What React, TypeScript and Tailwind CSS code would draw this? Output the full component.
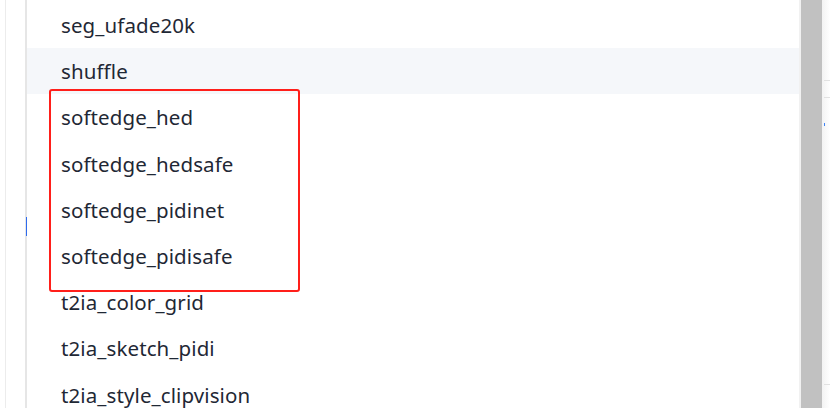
const options = [
  'seg_ufade20k',
  'shuffle',
  'softedge_hed',
  'softedge_hedsafe',
  'softedge_pidinet',
  'softedge_pidisafe',
  't2ia_color_grid',
  't2ia_sketch_pidi',
  't2ia_style_clipvision',
];

export default function App() {
  return (
    <div className="flex h-[408px] w-[830px] overflow-hidden bg-white" style={{ fontFamily: '"Noto Sans", sans-serif' }}>
      {/* left edge of the page behind the popup */}
      <div className="flex h-full w-[27px] shrink-0">
        <div className="ml-[5px] h-full w-[20px] border-l border-[#ececec]" />
        <div className="flex h-full w-[2px] flex-col bg-[#e6e6e6] pt-[217px]">
          <span className="ml-[1px] h-[19px] w-[1px] bg-[#2f6bed]" />
        </div>
      </div>

      {/* dropdown list */}
      <div className="relative flex w-[772px] shrink-0 flex-col pt-[2px]">
        {options.map((name) => (
          <div
            key={name}
            className={`h-[46.2px] shrink-0 pl-[34px] text-[20.5px] leading-[46.2px] tracking-[0.1px] text-[#1f2835] ${
              name === 'shuffle' ? 'bg-[#f5f7fa]' : ''
            }`}
          >
            {name}
          </div>
        ))}
        <div className="pointer-events-none absolute left-[22px] top-[89px] h-[203px] w-[251px] rounded-[3px] border-2 border-[#ff1f1a]" />
      </div>

      {/* scrollbar */}
      <div className="h-full w-[23px] shrink-0 border-l-2 border-[#f1f1f1] bg-[#c1c1c1]" />

      {/* right page edge */}
      <div className="flex h-full flex-1 flex-col bg-gradient-to-r from-[#f3f3f3] to-white pl-[2px] pt-[80px]">
        <div className="h-[18px] border-y border-[#e2e2e2]" />
        <span className="mt-[25px] h-[3px] w-[1px] bg-[#3b82f6]" />
        <div className="mt-[258px] h-[1px] bg-[#e2e2e2]" />
      </div>
    </div>
  );
}
